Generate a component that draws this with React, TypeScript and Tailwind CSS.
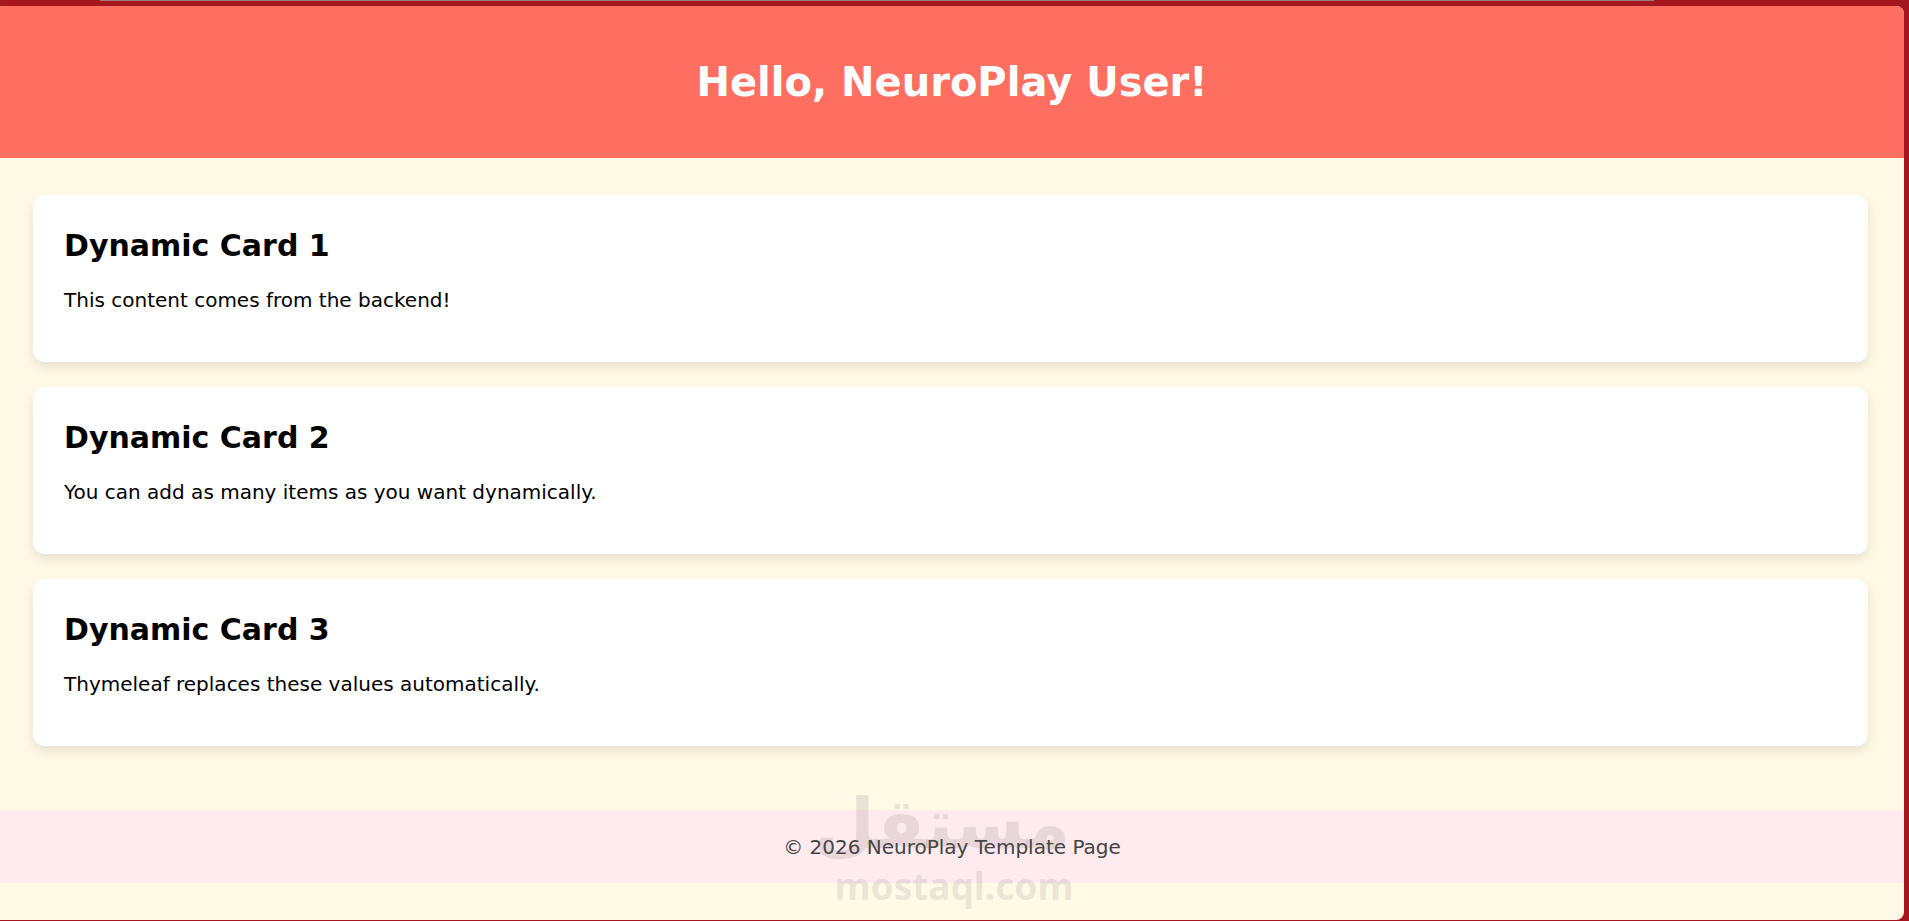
import React from "react";

const cards = [
  { title: "Dynamic Card 1", text: "This content comes from the backend!" },
  { title: "Dynamic Card 2", text: "You can add as many items as you want dynamically." },
  { title: "Dynamic Card 3", text: "Thymeleaf replaces these values automatically." },
];

export default function App() {
  return (
    <div
      className="relative h-[921px] w-full overflow-hidden bg-[#a5161f] pt-[6px] pr-[5px] pb-[1px]"
      style={{ fontFamily: '"DejaVu Sans", Verdana, sans-serif' }}
    >
      <div className="absolute left-[100px] top-0 h-[1px] w-[1554px] bg-[#9c7a7c]" />
      <div className="flex h-full flex-col overflow-hidden rounded-tl-[2px] rounded-tr-[8px] rounded-br-[8px] bg-[#fff9e6]">
        <header className="flex h-[152px] shrink-0 items-center justify-center bg-[#ff6f61]">
          <h1 className="text-[40px] font-bold leading-[48px] text-white">Hello, NeuroPlay User!</h1>
        </header>
        <main className="flex flex-col gap-[25px] pl-[33px] pr-[36px] pt-[37px]">
          {cards.map((c) => (
            <div
              key={c.title}
              className="h-[167px] rounded-[12px] bg-white px-[31px] pt-[33px] shadow-[0_5px_12px_rgba(0,0,0,0.1)]"
            >
              <h2 className="text-[30px] font-bold leading-[35px] text-black">{c.title}</h2>
              <p className="mt-[25px] text-[20px] leading-[24px] text-black">{c.text}</p>
            </div>
          ))}
        </main>
        <footer className="relative mt-[64px] flex h-[73px] shrink-0 items-center justify-center bg-[#ffebee]">
          <p className="pt-[1px] text-[20px] leading-[24px] text-[#444]">© 2026 NeuroPlay Template Page</p>
        </footer>
      </div>
      <div className="pointer-events-none absolute left-[838px] top-[776px] flex w-[232px] flex-col items-end text-[rgba(90,90,90,0.14)]">
        <span className="text-[70px] font-bold leading-[96px]" dir="rtl">مستقل</span>
        <span
          className="-mt-[6px] self-center text-[37px] font-bold leading-[40px]"
          style={{ fontFamily: '"Noto Sans", sans-serif' }}
        >
          mostaql.com
        </span>
      </div>
    </div>
  );
}
